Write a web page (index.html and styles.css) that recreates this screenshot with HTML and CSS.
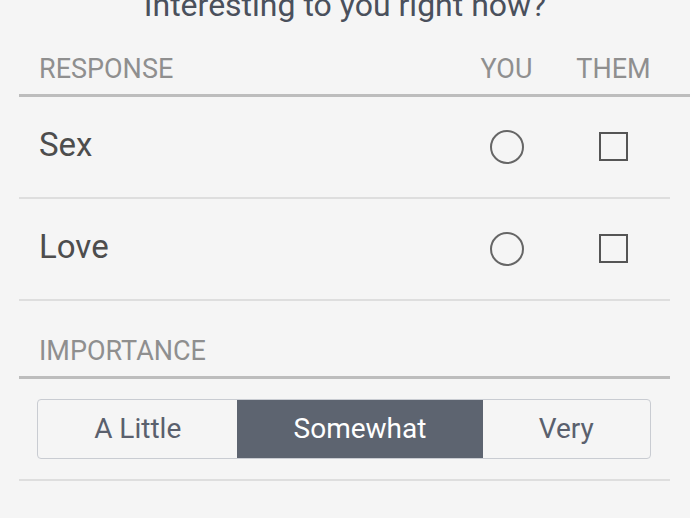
FILE: index.html
```html
<!DOCTYPE html>
<html>
<head>
<meta charset="utf-8">
<link rel="stylesheet" href="styles.css">
</head>
<body>
<div class="page">
  <div class="title">Interesting to you right now?</div>
  <div class="content">
    <div class="grid header">
      <span class="label">RESPONSE</span>
      <span class="col">YOU</span>
      <span class="col">THEM</span>
    </div>
    <div class="grid row">
      <span class="answer">Sex</span>
      <span class="col"><span class="radio"></span></span>
      <span class="col"><span class="check"></span></span>
    </div>
    <div class="grid row">
      <span class="answer">Love</span>
      <span class="col"><span class="radio"></span></span>
      <span class="col"><span class="check"></span></span>
    </div>
    <div class="section-head">IMPORTANCE</div>
    <div class="importance">
      <div class="segmented">
        <span class="seg">A Little</span>
        <span class="seg active">Somewhat</span>
        <span class="seg">Very</span>
      </div>
    </div>
  </div>
</div>
</body>
</html>
```

FILE: styles.css
```css
html, body {
  margin: 0;
  padding: 0;
  background: #f5f5f5;
}
body {
  font-family: Roboto, "Noto Sans", sans-serif;
  width: 690px;
  height: 518px;
  overflow: hidden;
}
.title {
  margin-top: -15px;
  height: 40px;
  line-height: 40px;
  font-size: 32px;
  color: #4a505c;
  text-align: center;
}
.content {
  padding: 0 20px 0 19px;
}
.grid {
  display: grid;
  grid-template-columns: 1fr 107px 107px;
  padding: 0 3px 0 20px;
  align-items: center;
}
.col {
  display: flex;
  justify-content: center;
  align-items: center;
}
.header {
  margin-top: 28px;
  margin-right: -20px;
  padding-right: 23px;
  font-size: 27px;
  line-height: 32px;
  color: #8f8f8f;
  padding-bottom: 9px;
  border-bottom: 3px solid #bdbdbd;
}
.row {
  border-bottom: 2px solid #dedede;
  box-sizing: border-box;
  height: 102px;
}
.row:first-of-type { height: 101px; }
.answer {
  font-size: 33px;
  color: #4d4d4d;
  margin-top: -6px;
}
.radio {
  width: 30px;
  height: 30px;
  border: 2px solid #666;
  border-radius: 50%;
}
.check {
  width: 25px;
  height: 25px;
  border: 2px solid #555;
  margin-top: -2px;
}
.section-head {
  padding: 34px 0 9px 20px;
  font-size: 27px;
  line-height: 32px;
  color: #8f8f8f;
  border-bottom: 3px solid #bdbdbd;
}
.importance {
  padding: 20px 19px 20px 18px;
  border-bottom: 2px solid #dedede;
}
.segmented {
  display: flex;
  height: 60px;
  border: 1px solid #c9ccd2;
  border-radius: 4px;
  box-sizing: border-box;
  overflow: hidden;
}
.seg {
  flex: 1 1 auto;
  display: flex;
  align-items: center;
  justify-content: center;
  font-size: 28px;
  color: #5a606d;
  padding-bottom: 2px;
}
.seg.active {
  background: #5d6470;
  color: #ffffff;
}
```
